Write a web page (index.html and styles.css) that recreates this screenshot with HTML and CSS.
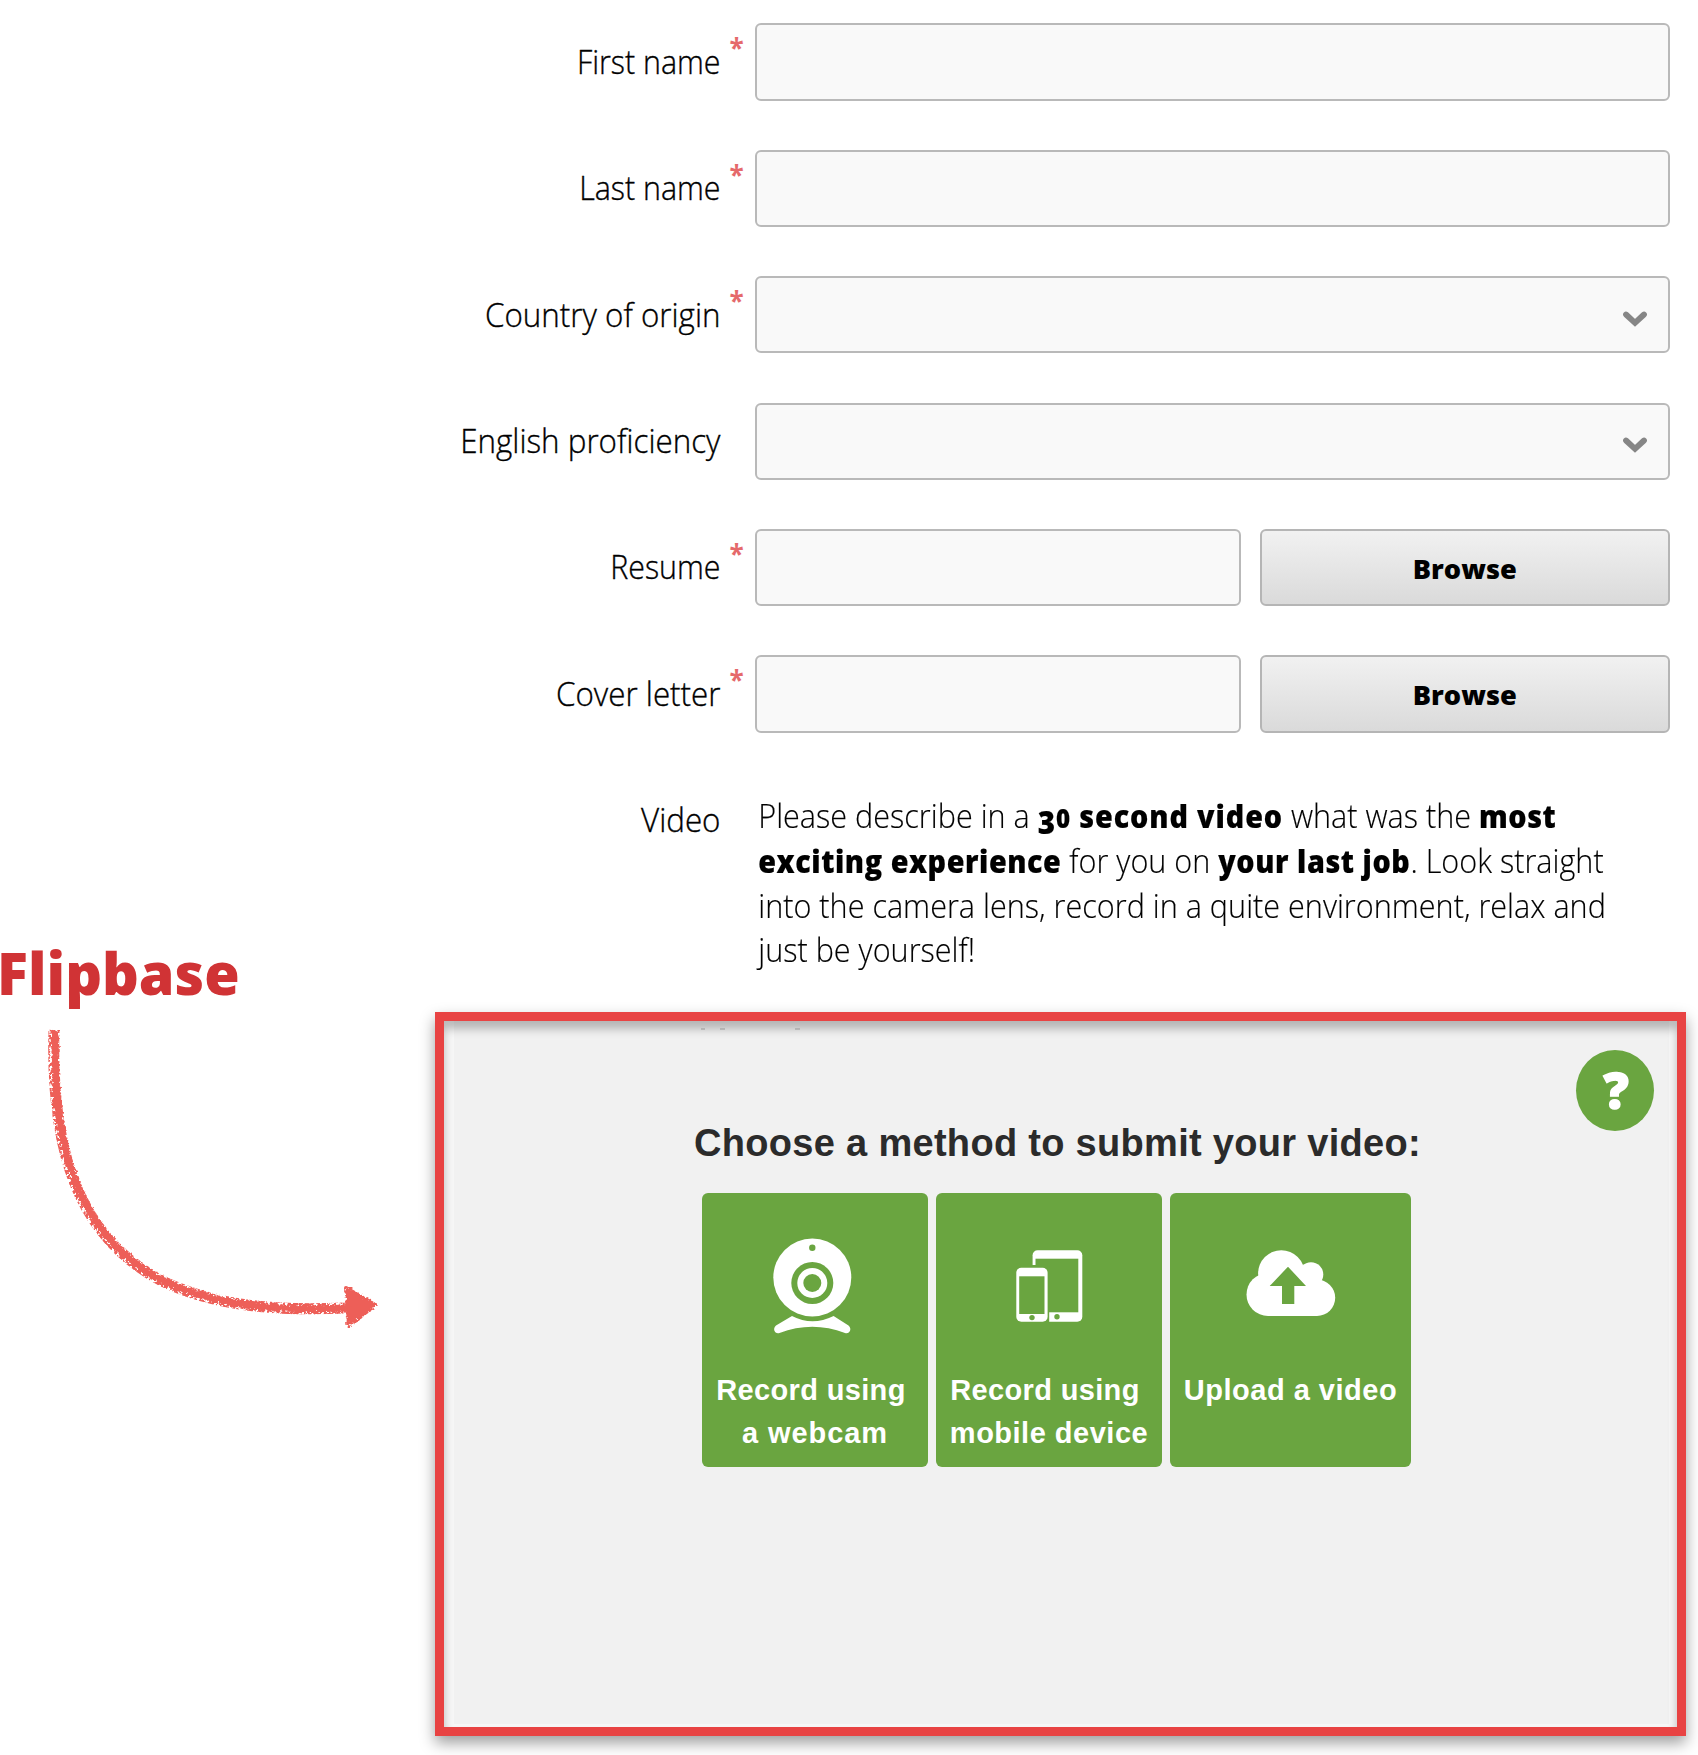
FILE: index.html
```
<!DOCTYPE html>
<html lang="en">
<head>
<meta charset="utf-8">
<title>Application form</title>
<link rel="stylesheet" href="styles.css">
</head>
<body>
<div class="page">
  <aside class="note">
    <h2 class="note-title">Flipbase</h2>
    <svg class="note-arrow" width="400" height="340" viewBox="0 0 400 340" fill="none">
      <defs>
        <filter id="chalk" x="-10%" y="-10%" width="120%" height="120%">
          <feTurbulence type="fractalNoise" baseFrequency="0.36" numOctaves="2" seed="4" result="n"/>
          <feDisplacementMap in="SourceGraphic" in2="n" scale="7" xChannelSelector="R" yChannelSelector="G"/>
        </filter>
        <filter id="speckle" x="-10%" y="-10%" width="120%" height="120%">
          <feTurbulence type="fractalNoise" baseFrequency="0.34" numOctaves="2" seed="9" result="n"/>
          <feColorMatrix in="n" type="matrix" values="0 0 0 0 0  0 0 0 0 0  0 0 0 0 0  9 0 0 0 -3.8" result="m"/>
          <feComposite in="SourceGraphic" in2="m" operator="in"/>
        </filter>
      </defs>
      <g stroke="#ed5f59" filter="url(#speckle)">
        <path stroke-width="11" d="M54 18C50.500 138 78 224 160 268C215 295 280 299 345 296"/>
        <path fill="#ed5f59" stroke-width="4" stroke-linejoin="round" d="M346 276L375 293L349 314Z"/>
      </g>
      <g stroke="#ed5f59" filter="url(#chalk)">
        <path stroke-width="7" d="M55.500 19C52 138 79.500 224 161 268C216 295 280 299 348 296"/>
        <path fill="#ed5f59" stroke-width="3.500" stroke-linejoin="round" d="M347 277L375 293L349 312Z"/>
      </g>
    </svg>
  </aside>

  <main class="form">
    <div class="row">
      <label class="label">First name</label><span class="req">*</span>
      <div class="field"></div>
    </div>
    <div class="row">
      <label class="label">Last name</label><span class="req">*</span>
      <div class="field"></div>
    </div>
    <div class="row">
      <label class="label wide">Country of origin</label><span class="req">*</span>
      <div class="field select"><svg width="24" height="16" viewBox="0 0 24 16"><path class="chev" d="M3 3.500L12 11.800L21 3.500"/></svg></div>
    </div>
    <div class="row">
      <label class="label wide">English proficiency</label><span class="req"></span>
      <div class="field select"><svg width="24" height="16" viewBox="0 0 24 16"><path class="chev" d="M3 3.500L12 11.800L21 3.500"/></svg></div>
    </div>
    <div class="row">
      <label class="label">Resume</label><span class="req">*</span>
      <div class="upload"><div class="field"></div><button class="browse" type="button">Browse</button></div>
    </div>
    <div class="row">
      <label class="label wide">Cover letter</label><span class="req">*</span>
      <div class="upload"><div class="field"></div><button class="browse" type="button">Browse</button></div>
    </div>
    <div class="row video">
      <label class="label wide">Video</label><span class="req"></span>
      <p class="brief">Please describe in a <strong class="first"><span class="three">3</span><span class="zero">0</span> second video</strong> what was the <strong>most</strong><br>
      <strong>exciting experience</strong> for you on <strong>your last job</strong>. Look straight<br>
      into the camera lens, record in a quite environment, relax and<br>
      just be yourself!</p>
    </div>

    <section class="recorder">
      <div class="panel">
        <svg class="remnant" width="100" height="2" viewBox="0 0 100 2"><path stroke="#cfcfcf" stroke-width="2" d="M1 1h4M20 1h5M95 1h5"/></svg>
        <div class="help">?</div>
        <h1 class="title">Choose a method to submit your video:</h1>
        <div class="tiles">
          <div class="tile">
            <svg width="100" height="104" viewBox="0 0 100 104">
              <circle class="w" cx="47.300" cy="44.500" r="39"/><circle class="g" cx="47.300" cy="14.800" r="3.200"/>
              <circle class="g" cx="47.300" cy="50" r="21"/><circle class="w" cx="47.300" cy="50" r="15"/><circle class="g" cx="47.300" cy="50" r="9"/>
              <path class="w" d="M27 83Q47.300 93.500 68.600 83L83.500 92.500C87.500 96 84.500 101.500 80 100Q47.300 87.500 14.500 100C10 101.500 7 96 11 92.500Z"/>
            </svg>
            <span class="cap lead">Record using</span><span class="cap loose">a webcam</span>
          </div>
          <div class="tile">
            <svg width="100" height="104" viewBox="0 0 100 104">
              <rect class="w" x="33.600" y="17.300" width="49.700" height="71.400" rx="5"/><rect class="g" x="36.500" y="25.700" width="42.800" height="53.600"/>
              <rect class="g" x="15" y="32" width="35.200" height="60"/>
              <circle class="g" cx="58" cy="83.800" r="2.700"/>
              <rect class="w" x="17.300" y="34.700" width="31.300" height="54" rx="5"/><rect class="g" x="20.200" y="43.300" width="25.300" height="37.700"/>
              <circle class="g" cx="33" cy="84.600" r="2.700"/>
            </svg>
            <span class="cap lead">Record using</span><span class="cap">mobile device</span>
          </div>
          <div class="tile big">
            <svg width="100" height="104" viewBox="0 0 100 104">
              <circle class="w" cx="27" cy="61.500" r="21.500"/><circle class="w" cx="40.300" cy="40.500" r="23.200"/>
              <circle class="w" cx="70" cy="41.500" r="12.300"/><circle class="w" cx="76" cy="64.800" r="18.200"/>
              <rect class="w" x="27" y="45" width="49" height="38"/>
              <path class="g" d="M47 33.700L65 53H53.300V71H41V53H28.700Z"/>
            </svg>
            <span class="cap">Upload a video</span>
          </div>
        </div>
      </div>
    </section>
  </main>
</div>
</body>
</html>
```
FILE: styles.css
```
* { box-sizing: border-box; }
body { margin: 0; background: #fff; font-family: "Open Sans", sans-serif; color: #000; }
.page { display: grid; grid-template-columns: 435px 1251px; min-height: 1755px; }

.note { padding-top: 932px; }
.note-title { width: 260px; margin: 0; text-indent: -3px; font-size: 58.5px; line-height: 80px; font-weight: 800; color: #d03335; transform: scaleX(.98); transform-origin: left; }
.note-arrow { display: block; }

.form { padding-top: 23.4px; }
.row { display: grid; grid-template-columns: 285px 35px 914.5px; height: 126.4px; align-items: start; }
.row.video { height: 230.2px; }
.label { padding-top: 16.5px; text-align: right; font-size: 33px; line-height: 44.7px; font-weight: 300; white-space: nowrap; -webkit-text-stroke: .35px #000; transform: translateX(.5px) scaleX(.92); transform-origin: right; }
.label.wide { transform: translateX(.5px) scaleX(.95); }
.req { padding: 8px 0 0 9.5px; font-size: 26px; line-height: 34px; font-weight: 700; color: #e5696b; }
.field { height: 77.3px; border: 2px solid #b9b9b9; border-radius: 6px; background: #f9f9f9; }
.select { display: flex; justify-content: flex-end; align-items: center; padding: 8px 20.5px 0 0; }
.chev { fill: none; stroke: #868686; stroke-width: 5.8; stroke-linecap: round; }
.upload { display: grid; grid-template-columns: 485.5px 409.5px; gap: 19.5px; }
.browse { height: 77.3px; padding: 2px 0 0; border: 2px solid #b5b5b5; border-radius: 6px; background: linear-gradient(#f1f1f1, #dadada); font: 800 27.2px "Open Sans", sans-serif; color: #000; }
.brief { width: max-content; margin: 0; padding: 12.5px 0 0 3.5px; font-size: 33px; line-height: 44.7px; font-weight: 300; white-space: nowrap; -webkit-text-stroke: .15px #000; transform: scaleX(.927); transform-origin: left; }
.brief strong { font-size: 31px; line-height: 0; font-weight: 800; letter-spacing: .6px; }
.brief .first { letter-spacing: .95px; }
.three { display: inline-block; line-height: 0; font-size: 32px; transform: translateY(6px); }
.zero { font-size: 26px; }

.recorder { position: relative; height: 724px; padding: 0 8px 3px 10px; border: 9px solid #e84343; background: #f7f7f7; box-shadow: 0 7px 14px rgba(0, 0, 0, .38); }
.recorder::after { content: ""; position: absolute; inset: 0; box-shadow: inset 0 8px 10px rgba(0, 0, 0, .25); pointer-events: none; }
.panel { position: relative; height: 100%; padding-top: 100px; background: #f1f1f1; font-family: "Liberation Sans", Arial, sans-serif; }
.remnant { position: absolute; left: 246px; top: 7px; }
.help { position: absolute; right: 15px; top: 29px; width: 78px; height: 81px; padding-left: 2px; border-radius: 50%; background: #6aa540; color: #fff; font: 800 50px/81px "Open Sans", sans-serif; text-align: center; -webkit-text-stroke: 1.5px #fff; }
.title { margin: 0 8px 28px 0; text-align: center; font-size: 38px; line-height: 44px; font-weight: 700; letter-spacing: .3px; color: #2b2b2b; white-space: nowrap; }
.tiles { display: flex; justify-content: center; gap: 8.5px; margin-right: 10px; }
.tile { display: flex; flex-direction: column; align-items: center; width: 225.5px; height: 274px; padding-top: 40px; border-radius: 6px; background: #6aa540; }
.tile.big { width: 240.5px; }
.tile svg { margin-bottom: 32.5px; }
.cap { font-size: 29px; line-height: 43px; font-weight: 700; letter-spacing: .5px; color: #fff; white-space: nowrap; }
.cap.lead { margin-right: 8px; letter-spacing: .35px; }
.cap.loose { letter-spacing: .9px; }
.w { fill: #fff; }
.g { fill: #6aa540; }
```
